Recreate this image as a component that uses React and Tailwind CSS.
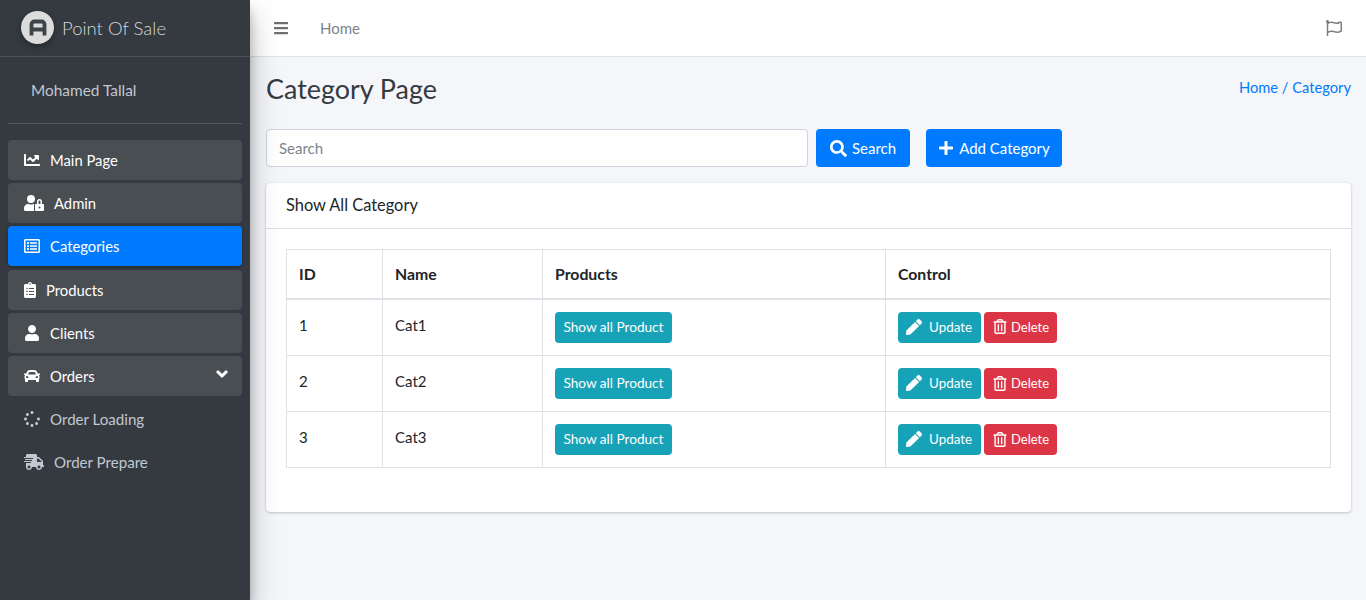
import {
  FaBars,
  FaCar,
  FaChartLine,
  FaChevronDown,
  FaClipboardList,
  FaPen,
  FaPlus,
  FaRegFlag,
  FaRegListAlt,
  FaRegTrashAlt,
  FaSearch,
  FaShippingFast,
  FaSpinner,
  FaUser,
  FaUserLock,
} from 'react-icons/fa';

const categories = [
  { id: 1, name: 'Cat1' },
  { id: 2, name: 'Cat2' },
  { id: 3, name: 'Cat3' },
];

const menu = [
  { label: 'Main Page', icon: FaChartLine, iconSize: 'w-[16px]' },
  { label: 'Admin', icon: FaUserLock, iconSize: 'w-[20px]' },
  { label: 'Categories', icon: FaRegListAlt, iconSize: 'w-[16px]', active: true },
  { label: 'Products', icon: FaClipboardList, iconSize: 'w-[12px]' },
  { label: 'Clients', icon: FaUser, iconSize: 'w-[16px]' },
  { label: 'Orders', icon: FaCar, iconSize: 'w-[16px]', caret: true },
  { label: 'Order Loading', icon: FaSpinner, iconSize: 'w-[16px]', plain: true },
  { label: 'Order Prepare', icon: FaShippingFast, iconSize: 'w-[20px]', plain: true },
];

const NavItem = ({ item }) => {
  const Icon = item.icon;
  let tone = 'bg-[#494e53] text-white text-[14.8px]';
  if (item.active) tone = 'bg-[#007bff] text-white text-[14.8px] shadow-[0_1px_3px_rgba(0,0,0,0.3)]';
  if (item.plain) tone = 'text-[#c2c7d0] text-[15.1px]';

  return (
    <div className={`flex h-[40px] mb-[3.2px] items-center gap-[10px] rounded pl-4 pr-[14px] ${tone}`}>
      <Icon className={`${item.iconSize} h-4 shrink-0`} />
      <span className="leading-6">{item.label}</span>
      {item.caret && <FaChevronDown className="ml-auto mb-[3px] w-3 h-3 stroke-[50px]" />}
    </div>
  );
};

const Sidebar = () => (
  <aside className="w-[250px] shrink-0 bg-[#343a40] z-10 shadow-[0_14px_28px_rgba(0,0,0,0.25),0_10px_10px_rgba(0,0,0,0.22)]">
    <div className="flex h-[57px] items-center border-b border-[#4b545c] pl-[21px] pb-[1px]">
      <div className="flex w-[33px] h-[33px] items-center justify-center rounded-full bg-[#dcdcdc] shadow-[0_3px_6px_rgba(0,0,0,0.3)]">
        <svg viewBox="0 0 20 20" className="w-[20px] h-[20px]">
          <path
            d="M3.5 17.5V6.5a3 3 0 0 1 3-3h7a3 3 0 0 1 3 3v11M3.5 11.5h13"
            fill="none"
            stroke="#3f4347"
            strokeWidth="3.8"
          />
        </svg>
      </div>
      <span className="ml-2 mt-[1px] text-[18.5px] leading-7 font-light text-[#d5d8dc]">Point Of Sale</span>
    </div>
    <div className="mx-2 h-[67px] border-b border-[#4f5962] pl-[23px] pt-[21px] text-[15.4px] leading-6 text-[#c2c7d0]">
      Mohamed Tallal
    </div>
    <nav className="px-2 pt-4">
      {menu.map((item) => (
        <NavItem key={item.label} item={item} />
      ))}
    </nav>
  </aside>
);

const Topbar = () => (
  <header className="flex h-[57px] items-center border-b border-[#dee2e6] bg-white pl-6 pr-[23px]">
    <FaBars className="w-[14px] h-4 text-[#6f6f6f]" />
    <span className="ml-[32px] text-[15px] text-[#7b8390]">Home</span>
    <FaRegFlag className="ml-auto mr-[1px] w-4 h-4 text-[#7d7d7d]" />
  </header>
);

const RowActions = () => (
  <div className="flex gap-[3px] leading-5">
    <button className="flex h-[31px] w-[83px] items-center rounded bg-[#17a2b8] pl-[8px] pb-[1px] text-[13.4px] text-white">
      <FaPen className="w-4 h-4" />
      <span className="ml-[7px]">Update</span>
    </button>
    <button className="flex h-[31px] w-[73px] items-center rounded bg-[#dc3545] pl-[9px] pb-[1px] text-[13px] text-white">
      <FaRegTrashAlt className="w-[14px] h-[15px]" />
      <span className="ml-[4px]">Delete</span>
    </button>
  </div>
);

const CategoryTable = () => (
  <table className="w-[1045px] table-fixed border-collapse text-[15px] text-[#212529]">
    <thead>
      <tr className="h-[49px] text-left text-[15.8px]">
        <th className="w-[96px] border border-b-2 border-[#dee2e6] px-3 font-bold">ID</th>
        <th className="w-[160px] border border-b-2 border-[#dee2e6] px-3 font-bold">Name</th>
        <th className="w-[343px] border border-b-2 border-[#dee2e6] px-3 font-bold">Products</th>
        <th className="border border-b-2 border-[#dee2e6] px-3 font-bold">Control</th>
      </tr>
    </thead>
    <tbody>
      {categories.map((cat) => (
        <tr key={cat.id} className={cat.id === 1 ? 'h-[57px]' : 'h-[56px]'}>
          <td className="border border-[#dee2e6] px-3 pb-[5px]">{cat.id}</td>
          <td className="border border-[#dee2e6] px-3 pb-[5px]">{cat.name}</td>
          <td className="border border-[#dee2e6] px-3">
            <button className="h-[31px] w-[117px] rounded bg-[#17a2b8] pb-[1px] text-[13.6px] text-white">
              Show all Product
            </button>
          </td>
          <td className="border border-[#dee2e6] px-3">
            <RowActions />
          </td>
        </tr>
      ))}
    </tbody>
  </table>
);

const App = () => (
  <div className="flex min-h-screen bg-[#f4f6f9] font-['Lato','Liberation_Sans',sans-serif]">
    <Sidebar />
    <main className="min-w-0 flex-1">
      <Topbar />
      <div className="pl-4 pr-[15px]">
        <div className="flex h-[72px] items-start justify-between">
          <h1 className="mt-[13px] text-[26.9px] leading-[37px] text-[#343a40]">Category Page</h1>
          <span className="mt-[18px] text-[14.7px] leading-6 text-[#007bff]">Home / Category</span>
        </div>

        <div className="flex">
          <input
            placeholder="Search"
            className="h-[38px] w-[542px] rounded border border-[#ced4da] bg-white px-3 text-[15px] placeholder:text-[#7d858c]"
          />
          <button className="ml-2 flex h-[38px] w-[94px] items-center justify-center gap-[5px] rounded bg-[#007bff] text-[15px] text-white">
            <FaSearch className="w-[17px] h-[17px]" />
            Search
          </button>
          <button className="ml-4 flex h-[38px] w-[136px] items-center justify-center gap-[5px] rounded bg-[#007bff] text-[15px] text-white">
            <FaPlus className="w-4 h-4" />
            Add Category
          </button>
        </div>

        <section className="mt-4 h-[329px] rounded bg-white shadow-[0_0_1px_rgba(0,0,0,0.13),0_1px_3px_rgba(0,0,0,0.2)]">
          <div className="flex h-[46px] items-center border-b border-[#dfdfdf] px-5 text-[16.4px] text-[#212529]">
            Show All Category
          </div>
          <div className="p-5">
            <CategoryTable />
          </div>
        </section>
      </div>
    </main>
  </div>
);

export default App;
